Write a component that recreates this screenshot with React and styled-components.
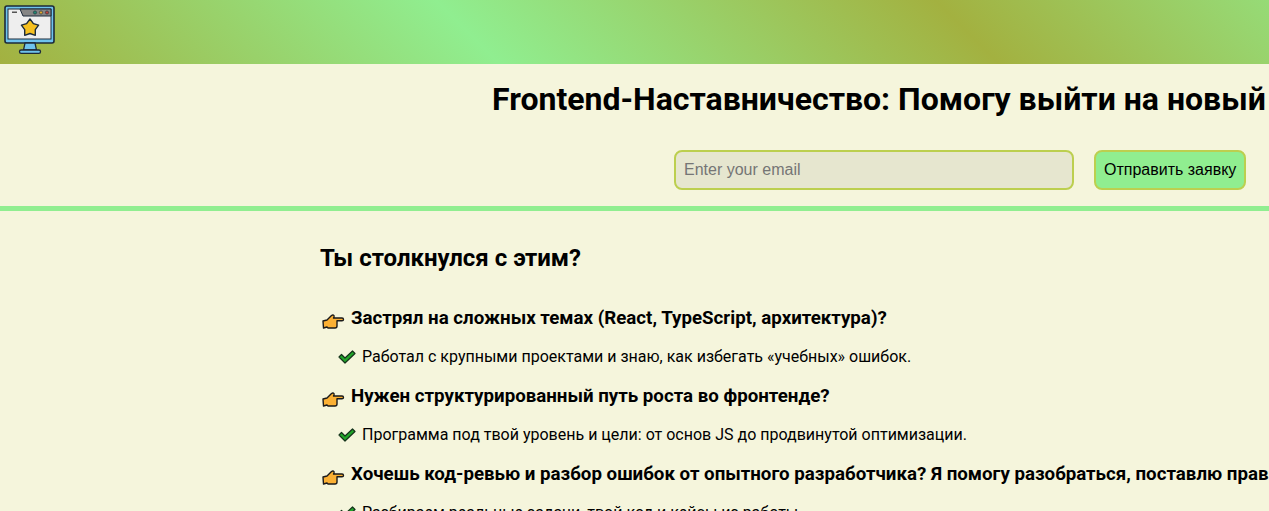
import React from "react";
import styled, { createGlobalStyle } from "styled-components";

const Global = createGlobalStyle`
    html, body {
        margin: 0;
        height: 511px;
        overflow: hidden;
        background: #f5f5dc;
        font-family: Roboto, "Liberation Sans", sans-serif;
        color: #000;
    }
`

const Page = styled.div`
    display: flex;
    flex-direction: column;
    width: 1269px;
    height: 511px;
    overflow: hidden;
`

const TopBar = styled.header`
    display: flex;
    align-items: flex-start;
    flex: none;
    box-sizing: border-box;
    height: 64px;
    padding: 5px 0 0 4px;
    background: linear-gradient(45deg, #a3b140 0%, #90ee90 37.5%, #a3b140 75%, #96db77 100%);
`

const Hero = styled.section`
    flex: none;
    height: 142px;
    border-bottom: 5px solid #90ee90;
    padding-left: 492px;
    white-space: nowrap;
`

const Title = styled.h1`
    margin: 0;
    padding-top: 16px;
    font-size: 32px;
    line-height: 38px;
    font-weight: 700;
`

const Form = styled.form`
    display: flex;
    gap: 20px;
    margin: 32px 0 0 182px;
`

const EmailInput = styled.input`
    box-sizing: border-box;
    width: 400px;
    height: 40px;
    padding: 0 8px;
    background: #e6e6cf;
    border: 2px solid #bccf4f;
    border-radius: 8px;
    font-family: "Liberation Sans", sans-serif;
    font-size: 16px;
    &::placeholder { color: #757575; opacity: 1; }
`

const SubmitButton = styled.button`
    box-sizing: border-box;
    height: 40px;
    padding: 0 8px;
    background: #90ee90;
    border: 2px solid #bccf4f;
    border-radius: 8px;
    color: #000;
    font-family: "Liberation Sans", sans-serif;
    font-size: 16px;
`

const Content = styled.main`
    padding: 33px 0 0 320px;
    white-space: nowrap;
`

const Heading = styled.h2`
    margin: 0 0 34px;
    font-size: 24px;
    line-height: 28px;
    font-weight: 700;
`

const Question = styled.h3`
    display: flex;
    align-items: center;
    gap: 6px;
    margin: 0;
    height: 24px;
    font-size: 18.72px;
    line-height: 24px;
    font-weight: 700;

    & svg {
        flex: none;
        margin-top: 5px;
    }
`

const Answer = styled.p`
    display: flex;
    align-items: center;
    gap: 6px;
    height: 20px;
    margin: 17px 0 17px 18px;
    font-size: 16px;
    line-height: 20px;

    & svg {
        flex: none;
    }
`

const Logo = () => (
    <svg width="51" height="49" viewBox="0 0 51 49">
        <rect x="1" y="1" width="49" height="37" rx="2" fill="#6fc3ee" stroke="#1c2a3a" strokeWidth="1.6" />
        <rect x="4" y="4" width="43" height="30" fill="#eeeeee" stroke="#1c2a3a" strokeWidth="1" />
        <path d="M16 4H47V11H19Z" fill="#858585" stroke="#1c2a3a" strokeWidth="1" />
        <rect x="8" y="6.500" width="5" height="1.500" fill="#555" />
        <circle cx="31" cy="7.500" r="1.600" fill="#1f8a70" stroke="#1c2a3a" strokeWidth=".6" />
        <circle cx="37" cy="7.500" r="1.600" fill="#e0a82e" stroke="#1c2a3a" strokeWidth=".6" />
        <circle cx="43" cy="7.500" r="1.600" fill="#c0453a" stroke="#1c2a3a" strokeWidth=".6" />
        <path d="M26 14L29.400 18.600L34.600 20.200L31.300 24.600L31.300 30.300L26 28.500L20.700 30.300L20.700 24.600L17.400 20.200L22.600 18.600Z" fill="#f6c020" stroke="#1c2a3a" strokeWidth="1.400" strokeLinejoin="round" />
        <path d="M21 38H31L32.500 45H19.500Z" fill="#6fc3ee" stroke="#1c2a3a" strokeWidth="1.300" />
        <rect x="15.500" y="45" width="21" height="3.300" rx="1.600" fill="#6fc3ee" stroke="#1c2a3a" strokeWidth="1.300" />
    </svg>
)

const PointingHand = () => (
    <svg width="25" height="16" viewBox="0 0 25 16">
        <path d="M3 8L7 7L11.500 2.500C13 1.500 14.500 2.200 14 4L13.500 5H22C24 5 24 7.800 22 7.800H17V13C17 14.500 16 15 15 15H8L7 14L3.500 15Z" fill="#fbb034" stroke="#1a1a1a" strokeWidth="1.400" strokeLinejoin="round" />
    </svg>
)

const Check = () => (
    <svg width="18" height="14" viewBox="0 0 18 14">
        <path d="M1 7L3.500 4.500L7 8L14.500 1L17 3.500L7 13Z" fill="#22a52a" stroke="#14331a" strokeWidth="1.200" strokeLinejoin="round" />
    </svg>
)

const items = [
    {
        q: "Застрял на сложных темах (React, TypeScript, архитектура)?",
        a: "Работал с крупными проектами и знаю, как избегать «учебных» ошибок.",
    },
    {
        q: "Нужен структурированный путь роста во фронтенде?",
        a: "Программа под твой уровень и цели: от основ JS до продвинутой оптимизации.",
    },
    {
        q: "Хочешь код-ревью и разбор ошибок от опытного разработчика? Я помогу разобраться, поставлю правильные привычки",
        a: "Разбираем реальные задачи, твой код и кейсы из работы.",
    },
]

export default function App() {
    return (
        <Page>
            <Global />
            <TopBar>
                <Logo />
            </TopBar>
            <Hero>
                <Title>Frontend-Наставничество: Помогу выйти на новый уровень</Title>
                <Form onSubmit={(e) => e.preventDefault()}>
                    <EmailInput placeholder="Enter your email" type="email" />
                    <SubmitButton>Отправить заявку</SubmitButton>
                </Form>
            </Hero>
            <Content>
                <Heading>Ты столкнулся с этим?</Heading>
                {items.map((item) => (
                    <div key={item.q}>
                        <Question><PointingHand />{item.q}</Question>
                        <Answer><Check />{item.a}</Answer>
                    </div>
                ))}
            </Content>
        </Page>
    )
}
